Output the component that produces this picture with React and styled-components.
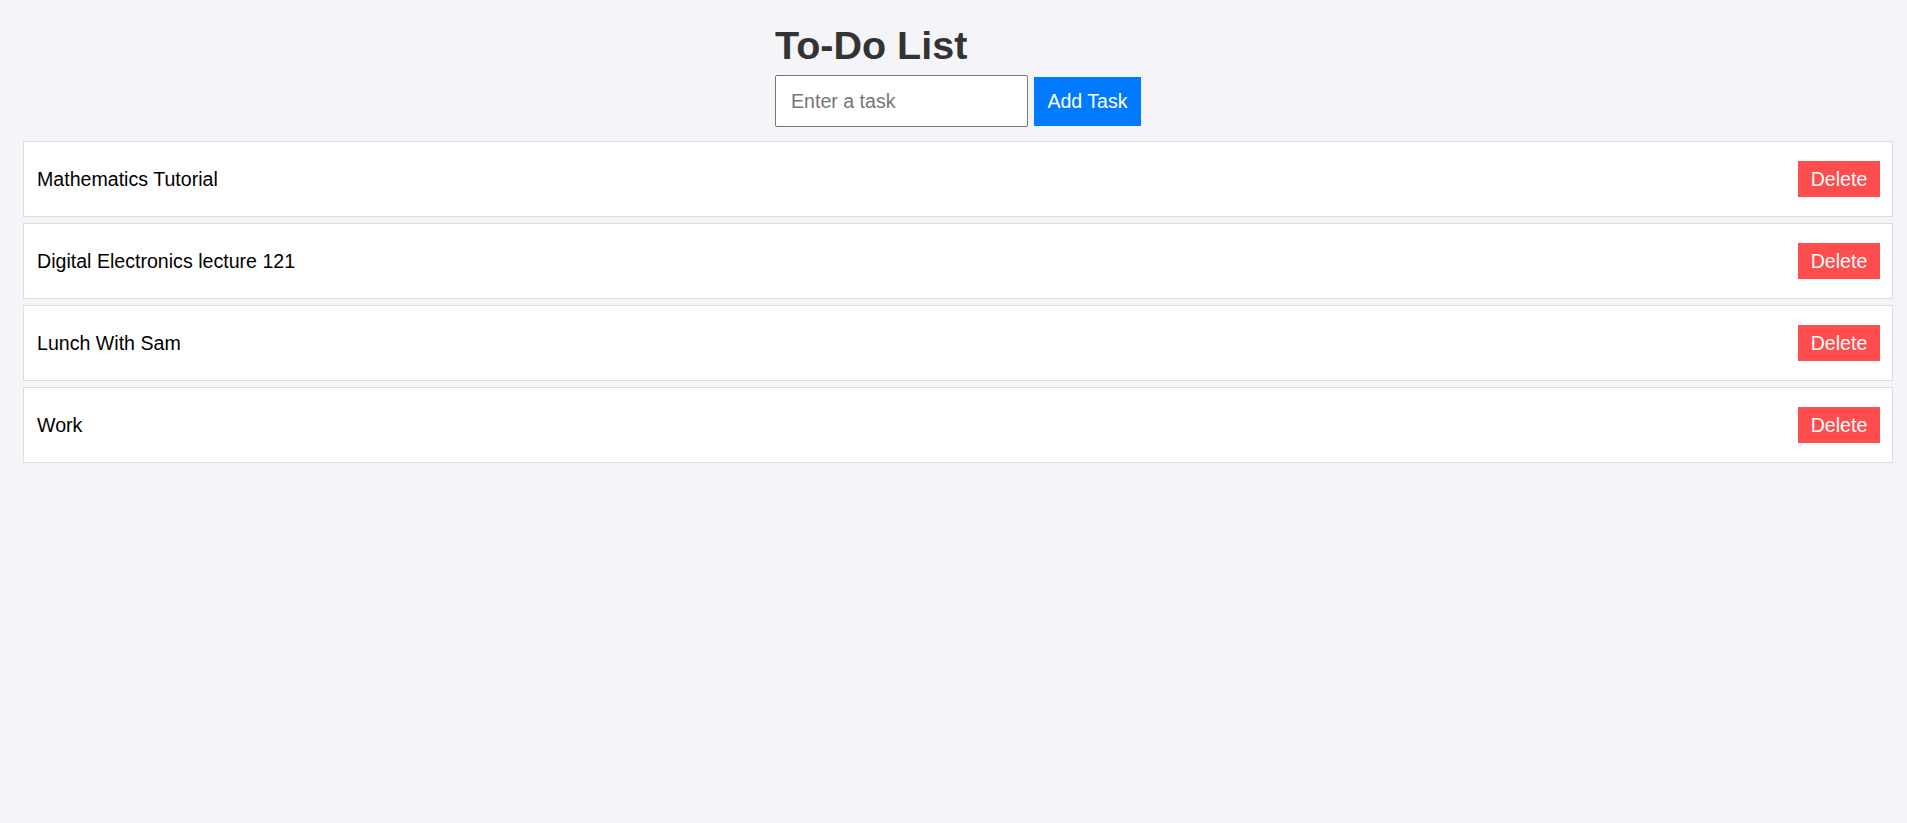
import React, { useState } from "react";
import styled, { createGlobalStyle } from "styled-components";

const GlobalStyle = createGlobalStyle`
  body {
    margin: 0;
    background-color: #f4f4f9;
    font-family: "Liberation Sans", Arial, sans-serif;
  }
`;

const Page = styled.div`
  padding: 23px 14px 40px 23px;
`;

const Header = styled.div`
  width: fit-content;
  margin: 0 auto;
`;

const Title = styled.h1`
  margin: 0;
  font-size: 39.5px;
  line-height: 44px;
  font-weight: bold;
  color: #333;
`;

const Form = styled.form`
  display: flex;
  align-items: center;
  gap: 6px;
  margin-top: 8px;
`;

const TaskInput = styled.input`
  box-sizing: border-box;
  width: 253px;
  height: 52px;
  padding: 0 15px;
  border: 1px solid #767676;
  border-radius: 2px;
  font-family: inherit;
  font-size: 19.6px;
  color: #000;
  background: #fff;
  outline: none;
  &::placeholder {
    color: #757575;
  }
`;

const AddButton = styled.button`
  width: 107px;
  height: 49px;
  padding: 0;
  border: none;
  background-color: #007bff;
  color: #fff;
  font-family: inherit;
  font-size: 19.6px;
  cursor: pointer;
`;

const List = styled.ul`
  list-style: none;
  margin: 14px 0 0;
  padding: 0;
  display: flex;
  flex-direction: column;
  gap: 6px;
`;

const Item = styled.li`
  box-sizing: border-box;
  height: 76px;
  display: flex;
  align-items: center;
  justify-content: space-between;
  padding: 0 12px 0 13px;
  background: #fff;
  border: 1px solid #ddd;
  font-size: 19.6px;
  color: #000;
`;

const DeleteButton = styled.button`
  width: 82px;
  height: 36px;
  padding: 0;
  border: none;
  background-color: #ff4d4d;
  color: #fff;
  font-family: inherit;
  font-size: 19.6px;
  cursor: pointer;
`;

export default function App() {
  const [tasks, setTasks] = useState([
    "Mathematics Tutorial",
    "Digital Electronics lecture 121",
    "Lunch With Sam",
    "Work",
  ]);
  const [text, setText] = useState("");

  const addTask = (e) => {
    e.preventDefault();
    if (!text.trim()) return;
    setTasks([...tasks, text.trim()]);
    setText("");
  };

  return (
    <>
      <GlobalStyle />
      <Page>
        <Header>
          <Title>To-Do List</Title>
          <Form onSubmit={addTask}>
            <TaskInput
              placeholder="Enter a task"
              value={text}
              onChange={(e) => setText(e.target.value)}
            />
            <AddButton type="submit">Add Task</AddButton>
          </Form>
        </Header>
        <List>
          {tasks.map((task, i) => (
            <Item key={i}>
              {task}
              <DeleteButton
                onClick={() => setTasks(tasks.filter((_, j) => j !== i))}
              >
                Delete
              </DeleteButton>
            </Item>
          ))}
        </List>
      </Page>
    </>
  );
}
